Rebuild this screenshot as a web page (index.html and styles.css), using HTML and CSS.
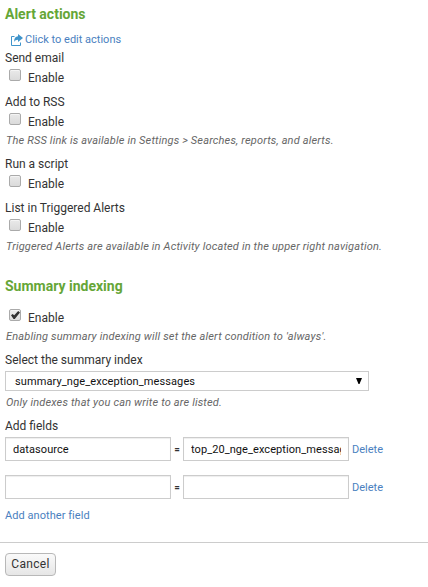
FILE: index.html
```
<!DOCTYPE html>
<html lang="en">
<head>
<meta charset="utf-8">
<title>Alert actions</title>
<link rel="stylesheet" href="styles.css">
</head>
<body>
<main class="form">
  <section class="section">
    <h2 class="title">Alert actions</h2>
    <a class="edit-link" href="#"><svg class="share" viewBox="0 0 12 12" width="12" height="12"><path d="M3.500 2.500H.5v9h9V8.500" fill="none" stroke="currentColor"/><path d="M7 0l5 4-5 4V5.800C5 5.800 4 6.500 3.200 8 3 4.500 4.500 2.500 7 2.300z" fill="currentColor"/></svg><span>Click to edit actions</span></a>
    <div class="group">
      <div class="label">Send email</div>
      <label class="check"><input type="checkbox"><span>Enable</span></label>
    </div>
    <div class="group rss">
      <div class="label">Add to RSS</div>
      <label class="check"><input type="checkbox"><span>Enable</span></label>
      <p class="hint">The RSS link is available in Settings &gt; Searches, reports, and alerts.</p>
    </div>
    <div class="group">
      <div class="label">Run a script</div>
      <label class="check"><input type="checkbox"><span>Enable</span></label>
    </div>
    <div class="group">
      <div class="label">List in Triggered Alerts</div>
      <label class="check"><input type="checkbox"><span>Enable</span></label>
      <p class="hint">Triggered Alerts are available in Activity located in the upper right navigation.</p>
    </div>
  </section>
  <section class="section summary">
    <h2 class="title">Summary indexing</h2>
    <div class="group first">
      <label class="check"><input type="checkbox" checked><span>Enable</span></label>
      <p class="hint">Enabling summary indexing will set the alert condition to 'always'.</p>
    </div>
    <div class="group index">
      <div class="label">Select the summary index</div>
      <div class="select"><span>summary_nge_exception_messages</span><svg viewBox="0 0 6 6" width="6" height="6"><path d="M0 0h6L3.500 6h-1z"/></svg></div>
      <p class="hint select-hint">Only indexes that you can write to are listed.</p>
    </div>
    <div class="group">
      <div class="label">Add fields</div>
      <div class="field-row"><input class="field" type="text" value="datasource"><b class="eq">=</b><input class="field" type="text" value="top_20_nge_exception_messages"><a class="link" href="#">Delete</a></div>
      <div class="field-row"><input class="field" type="text"><b class="eq">=</b><input class="field" type="text"><a class="link" href="#">Delete</a></div>
      <a class="link add" href="#">Add another field</a>
    </div>
  </section>
</main>
<footer class="footer"><button class="cancel" type="button">Cancel</button></footer>
</body>
</html>
```

FILE: styles.css
```
* { box-sizing: border-box; }
body {
  margin: 0;
  background: #fff;
  color: #333;
  font: 12px/19px Roboto, "Liberation Sans", sans-serif;
}
.form { height: 542px; padding: 4px 5px 0; }
.title { margin: 0; font-size: 14px; line-height: 20px; font-weight: 700; color: #65a637; }
.edit-link { display: flex; align-items: center; height: 19px; margin: 6px 0 0 6px; }
.share { margin-right: 2px; color: #3f94cb; overflow: visible; }
a { color: #4a7fc0; font-size: 11px; text-decoration: none; }
.group { margin-bottom: 5px; }
.rss { margin-bottom: 6px; }
.label { height: 19px; }
.check { display: flex; align-items: center; height: 20px; }
.check span { padding-top: 1px; }
.check input {
  appearance: none;
  width: 12px;
  height: 12px;
  margin: 0 7px 6px 4px;
  border: 1px solid #aaa;
  border-radius: 2px;
  background: linear-gradient(#e9e9e9, #dadada);
  box-shadow: inset 0 1px 0 #f4f4f4;
}
.check input:checked {
  background: linear-gradient(#ececec, #dedede);
}
.check input:checked::before {
  content: "";
  display: block;
  width: 9px;
  height: 8px;
  margin: 1px 0 0 1px;
  background: #333;
  clip-path: polygon(0 52%, 18% 36%, 36% 54%, 80% 0, 100% 20%, 42% 100%, 28% 100%);
}
.hint { margin: 0; height: 17px; padding-left: 1px; font-size: 11px; line-height: 17px; letter-spacing: 0.165px; font-style: italic; color: #666; white-space: nowrap; }
.summary { margin-top: 21px; }
.first { margin: 12px 0 6px; }
.index { margin-bottom: 6px; }
.select {
  display: flex;
  align-items: center;
  justify-content: space-between;
  width: 364px;
  height: 20px;
  margin-top: 1px;
  padding: 0 6px 0 9px;
  border: 1px solid #ccc;
  color: #111;
  font-size: 11px;
  letter-spacing: 0.1px;
}
.select-hint { margin-top: 3px; }
.field-row { display: flex; align-items: center; height: 24px; margin: 1px 0 14px; }
.field {
  width: 166px;
  height: 24px;
  padding: 0 7px;
  border: 1px solid #ccc;
  box-shadow: inset 0 1px 1px #eee;
  background: #fff;
  color: #111;
  font: 11px Roboto, sans-serif;
  letter-spacing: 0.07px;
}
.field-row + .field-row { margin: 0 0 7px; }
.eq { width: 12px; text-align: center; font-size: 10px; font-weight: 500; }
.link { display: block; margin-left: 3px; }
.add { margin-left: 0; letter-spacing: 0.05px; }
.footer { height: 45px; padding: 10px 5px 0; border-top: 1px solid #ccc; }
.cancel {
  display: block;
  width: 51px;
  height: 23px;
  padding: 0 0 2px;
  border: 1px solid #b8b8b8;
  border-radius: 4px;
  background: linear-gradient(#fafafa, #e6e6e6);
  color: #333;
  font: 12px Roboto, sans-serif;
  letter-spacing: 0.3px;
}
```
